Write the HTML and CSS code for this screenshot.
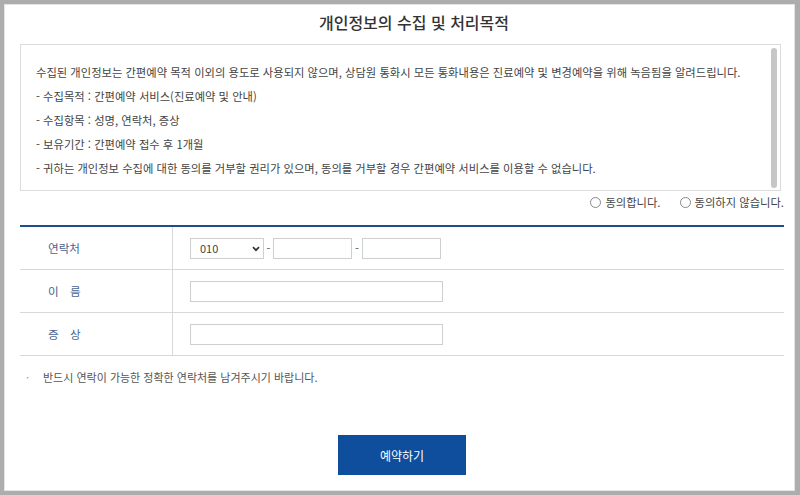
FILE: index.html
```html
<!DOCTYPE html>
<html lang="ko">
<head>
<meta charset="utf-8">
<title>개인정보의 수집 및 처리목적</title>
<link rel="stylesheet" href="styles.css">
</head>
<body>
<div class="sheet">
  <h1 class="title">개인정보의 수집 및 처리목적</h1>
  <div class="terms">
    <div class="terms-text">
      <p>수집된 개인정보는 간편예약 목적 이외의 용도로 사용되지 않으며, 상담원 통화시 모든 통화내용은 진료예약 및 변경예약을 위해 녹음됨을 알려드립니다.</p>
      <p>- 수집목적 : 간편예약 서비스(진료예약 및 안내)</p>
      <p>- 수집항목 : 성명, 연락처, 증상</p>
      <p>- 보유기간 : 간편예약 접수 후 1개월</p>
      <p>- 귀하는 개인정보 수집에 대한 동의를 거부할 권리가 있으며, 동의를 거부할 경우 간편예약 서비스를 이용할 수 없습니다.</p>
    </div>
    <div class="scrollbar"><div class="thumb"></div></div>
  </div>
  <div class="agree">
    <label class="choice"><span class="circle"></span>동의합니다.</label>
    <label class="choice"><span class="circle"></span>동의하지 않습니다.</label>
  </div>
  <div class="form">
    <div class="label">연락처</div>
    <div class="field">
      <span class="select-wrap">
        <select class="phone-select"><option>010</option></select>
        <svg class="chevron" width="8" height="6" viewBox="0 0 8 6"><polyline points="1,1.2 4,4.2 7,1.2" fill="none" stroke="#333" stroke-width="1.7"/></svg>
      </span>
      <span class="dash">-</span>
      <input class="input phone" type="text">
      <span class="dash">-</span>
      <input class="input phone" type="text">
    </div>
    <div class="label spaced">이 름</div>
    <div class="field"><input class="input wide" type="text"></div>
    <div class="label spaced">증 상</div>
    <div class="field"><input class="input wide" type="text"></div>
  </div>
  <p class="note"><span class="dot">·</span>반드시 연락이 가능한 정확한 연락처를 남겨주시기 바랍니다.</p>
  <button class="submit" type="button">예약하기</button>
</div>
</body>
</html>
```
FILE: styles.css
```css
html, body {
  margin: 0;
  padding: 0;
}
body {
  width: 800px;
  height: 495px;
  overflow: hidden;
  background: #adadad;
  font-family: "Noto Sans CJK KR", "Noto Sans", sans-serif;
  color: #444;
}
.sheet {
  box-sizing: border-box;
  width: 791px;
  height: 487px;
  margin: 4px 5px 0 4px;
  padding: 0 10px 0 15px;
  background: #fff;
  border: 1px solid #e4e4e4;
  display: flex;
  flex-direction: column;
}
.title {
  margin: 0 0 5px;
  padding-left: 24px;
  font-size: 16px;
  font-weight: 500;
  line-height: 34px;
  letter-spacing: 0;
  text-align: center;
  color: #333;
}
.terms {
  box-sizing: border-box;
  height: 147px;
  margin-right: 3px;
  border: 1px solid #dcdcdc;
  display: flex;
}
.terms-text {
  flex: 1;
  padding: 15px 0 0 15px;
  font-size: 11.3px;
  line-height: 24px;
  letter-spacing: 0;
  color: #444;
}
.terms-text p {
  margin: 0;
  white-space: nowrap;
}
.scrollbar {
  width: 9px;
  display: flex;
  padding: 3px 0 2px;
  box-sizing: border-box;
}
.thumb {
  width: 6px;
  background: #c6c6c6;
  border-radius: 3px;
}
.agree {
  height: 22px;
  margin-bottom: 12px;
  display: flex;
  justify-content: flex-end;
  align-items: center;
  gap: 19px;
}
.choice {
  display: flex;
  align-items: center;
  gap: 4px;
  font-size: 11.3px;
  color: #444;
}
.circle {
  box-sizing: border-box;
  width: 11px;
  height: 11px;
  border: 1px solid #888;
  border-radius: 50%;
  background: #fff;
}
.form {
  border-top: 2px solid #1e4e8e;
  display: grid;
  grid-template-columns: 153px 1fr;
  grid-auto-rows: 43px;
}
.label, .field {
  box-sizing: border-box;
  border-bottom: 1px solid #d8d8d8;
  display: flex;
  align-items: center;
}
.label {
  padding-left: 28px;
  border-right: 1px solid #d8d8d8;
  font-size: 11.6px;
  color: #4a6590;
}
.label.spaced {
  word-spacing: 8px;
}
.field {
  padding-left: 17px;
}
.select-wrap {
  position: relative;
  display: inline-flex;
}
.phone-select {
  box-sizing: border-box;
  width: 74px;
  height: 21px;
  margin: 0;
  padding: 0 0 0 9px;
  border: 1px solid #cfcfcf;
  border-radius: 0;
  background: #fff;
  font-family: inherit;
  font-size: 11px;
  color: #444;
  appearance: none;
  -webkit-appearance: none;
  outline: none;
}
.chevron {
  position: absolute;
  right: 4px;
  top: 8px;
}
.dash {
  width: 9px;
  text-align: center;
  font-size: 11px;
  color: #555;
}
.input {
  box-sizing: border-box;
  height: 21px;
  margin: 0;
  padding: 0 6px;
  border: 1px solid #cfcfcf;
  border-radius: 0;
  background: #fff;
  outline: none;
}
.phone {
  width: 79px;
}
.phone + .dash {
  width: 10px;
}
.wide {
  width: 253px;
}
.note {
  margin: 14px 0 0;
  display: flex;
  font-size: 11px;
  line-height: 14px;
  color: #555;
}
.dot {
  width: 23px;
  padding-left: 6px;
  box-sizing: border-box;
  color: #999;
}
.submit {
  align-self: center;
  width: 128px;
  height: 40px;
  margin-top: 51px;
  border: 0;
  background: #0e4e9d;
  color: #fff;
  font-family: inherit;
  font-size: 12px;
  cursor: pointer;
}
```
